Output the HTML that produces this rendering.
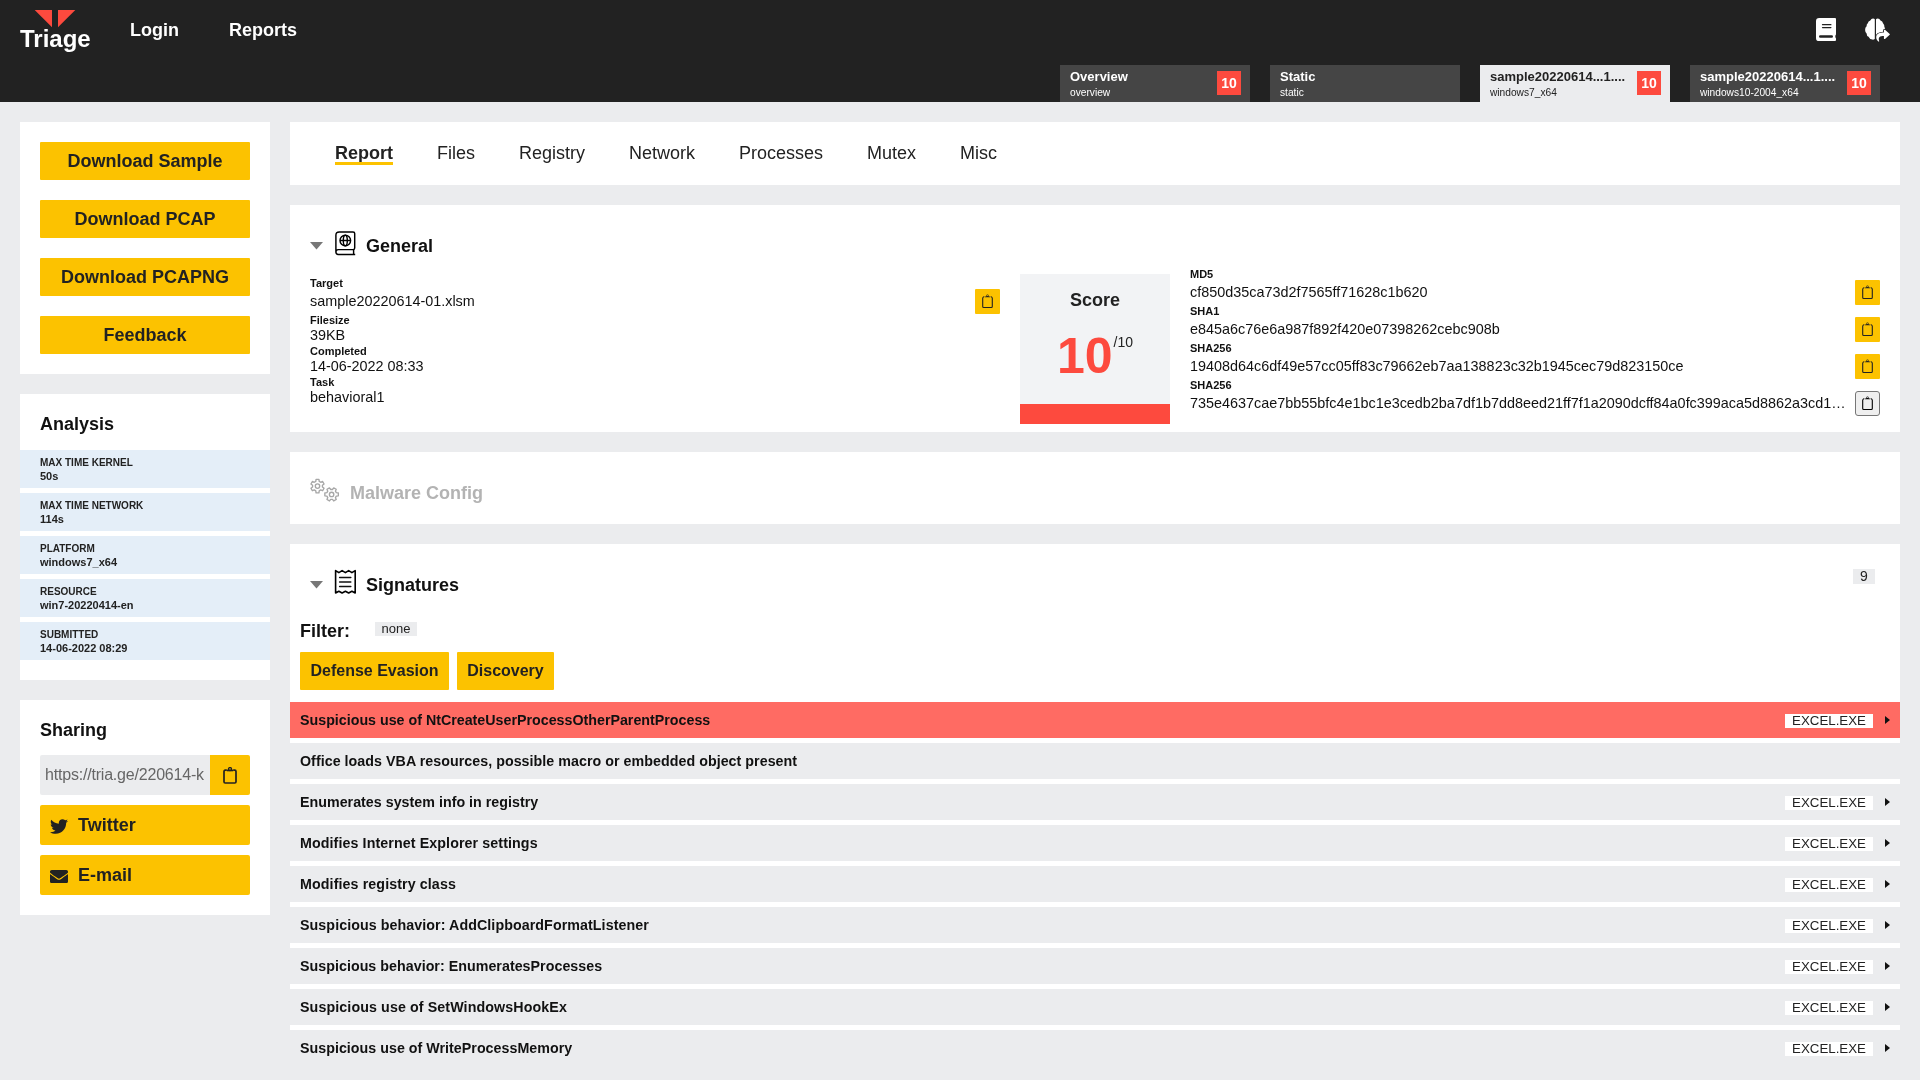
<!DOCTYPE html>
<html>
<head>
<meta charset="utf-8">
<style>
*{box-sizing:border-box;margin:0;padding:0}
html,body{width:1920px;height:1080px;overflow:hidden}
body{will-change:transform}
body{background:#ebecee;font-family:"Liberation Sans",sans-serif;color:#222;position:relative}
.abs{position:absolute}
#hdr{position:absolute;left:0;top:0;width:1920px;height:102px;background:#222}
#hdr .nav{position:absolute;top:18px;font-size:18px;font-weight:700;color:#fff;line-height:24px}
.tab{position:absolute;top:65px;width:190px;height:37px;background:#454545;color:#fff}
.tab.act{background:#ebecee;color:#222}
.tab .t1{position:absolute;left:10px;top:4px;font-size:13px;font-weight:700;line-height:16px;white-space:nowrap}
.tab .t2{position:absolute;left:10px;top:21px;font-size:10.2px;line-height:13px;white-space:nowrap}
.badge{position:absolute;left:157px;top:6px;width:24px;height:24px;background:#fd4a3e;color:#fff;font-weight:700;font-size:14px;line-height:24px;text-align:center}
.box{position:absolute;background:#fff}
.ybtn{position:absolute;background:#fcc200;color:#222;font-weight:700;text-align:center;border-radius:1px}
.dl{left:20px;width:210px;height:38px;font-size:18px;line-height:38px}
.h2{font-size:18px;font-weight:700;color:#111;position:absolute;line-height:22px}
.arow{position:absolute;left:0;width:250px;height:38px;background:#e4eef8;padding-left:20px}
.arow .l{position:absolute;left:20px;top:7px;font-size:10px;font-weight:700;line-height:12px;color:#222}
.arow .v{position:absolute;left:20px;top:20px;font-size:11px;font-weight:700;line-height:13px;color:#222}
.mtab{position:absolute;top:20px;font-size:18px;line-height:22px;color:#222}
.gl{position:absolute;left:20px;font-size:11px;font-weight:700;line-height:13px;color:#111}
.gv{position:absolute;left:20px;font-size:14.4px;line-height:17px;color:#111}
.hl{position:absolute;left:0;font-size:11px;font-weight:700;line-height:13px;color:#111}
.hv{position:absolute;left:0;width:662px;font-size:14.4px;line-height:17px;color:#111;white-space:nowrap;overflow:hidden;text-overflow:ellipsis}
.cp{position:absolute;width:25px;height:25px;background:#fcc200;border-radius:1px}
.cp svg{position:absolute;left:7px;top:5px}
.sig{position:absolute;left:0;width:1610px;height:36px;background:#ebecee}
.sig .st{position:absolute;left:10px;top:10px;font-size:14.25px;font-weight:700;line-height:17px;color:#111;white-space:nowrap}
.sig .tag{position:absolute;left:1495px;top:12px;width:88px;height:14px;background:#fff;font-size:13.3px;line-height:14px;text-align:center;color:#222}
.sig .car{position:absolute;left:1595px;top:14px;width:0;height:0;border-top:4px solid transparent;border-bottom:4px solid transparent;border-left:5px solid #111}
</style>
</head>
<body>
<div id="hdr">
  <svg class="abs" style="left:34px;top:10px" width="42" height="18" viewBox="0 0 42 18"><polygon points="0.7,0 18,0 18,17.3" fill="#fd4a3e"/><polygon points="24,0 41.3,0 24,17.3" fill="#fd4a3e"/></svg>
  <div class="abs" style="left:20px;top:24px;font-size:24px;font-weight:700;color:#fff;line-height:30px">Triage</div>
  <div class="nav" style="left:130px">Login</div>
  <div class="nav" style="left:229px">Reports</div>
  <svg class="abs" style="left:1815px;top:17px" width="23" height="26" viewBox="0 0 23 26"><path fill="#fff" d="M1 4.2Q1 1 4.2 1H20Q21 1 21 2V17.6Q20.3 18.3 20.3 19.5Q20.3 20.7 21 21.4V23.1Q21 24.1 20 24.1H4.2Q1 24.1 1 20.9Z"/><rect x="6.9" y="7" width="9.6" height="1.3" rx="0.6" fill="#222"/><rect x="6.9" y="10" width="9.6" height="1.2" rx="0.6" fill="#222"/><rect x="4" y="18.2" width="14" height="2.6" rx="1.3" fill="#222"/></svg>
  <svg class="abs" style="left:1864px;top:17px" width="28" height="26" viewBox="0 0 28 26"><path fill="#fff" d="M10.8 2.2Q10.2 1.6 9 1.6Q7.2 1.6 6.3 3.4Q4.2 3.8 3.8 6.2Q2.4 7.2 2.6 9.2Q1 10.4 1.1 13Q1.1 15.2 2.6 16.4Q2.6 18.8 4.6 19.8Q5.6 22.4 8.4 22.6Q9.6 22.8 10.8 22Z"/><path fill="#fff" d="M12 2.2Q12.6 1.6 13.8 1.6Q15.6 1.6 16.5 3.4Q18.6 3.8 19 6.2Q20.6 7.6 20.4 10Q21.6 11.4 20.8 13.4L12 19Z"/><g transform="translate(12.2 11.8) scale(0.0268)"><path d="M503.691 189.836L327.687 37.851C312.281 24.546 288 35.347 288 56.015v80.053C127.371 137.907 0 170.1 0 322.326c0 61.441 39.581 122.309 83.333 154.132 13.653 9.931 33.111-2.533 28.077-18.631C66.066 312.814 132.917 274.316 288 272.085V360c0 20.7 24.3 31.453 39.687 18.164l176.004-152c11.071-9.562 11.086-26.753 0-36.328z" fill="#222" stroke="#222" stroke-width="60" stroke-linejoin="round"/><path d="M503.691 189.836L327.687 37.851C312.281 24.546 288 35.347 288 56.015v80.053C127.371 137.907 0 170.1 0 322.326c0 61.441 39.581 122.309 83.333 154.132 13.653 9.931 33.111-2.533 28.077-18.631C66.066 312.814 132.917 274.316 288 272.085V360c0 20.7 24.3 31.453 39.687 18.164l176.004-152c11.071-9.562 11.086-26.753 0-36.328z" fill="#fff"/></g></svg>
  <div class="tab" style="left:1060px"><div class="t1">Overview</div><div class="t2">overview</div><div class="badge">10</div></div>
  <div class="tab" style="left:1270px"><div class="t1">Static</div><div class="t2">static</div></div>
  <div class="tab act" style="left:1480px"><div class="t1">sample20220614...1....</div><div class="t2">windows7_x64</div><div class="badge">10</div></div>
  <div class="tab" style="left:1690px"><div class="t1">sample20220614...1....</div><div class="t2">windows10-2004_x64</div><div class="badge">10</div></div>
</div>

<!-- left sidebar -->
<div class="box" style="left:20px;top:122px;width:250px;height:252px">
  <div class="ybtn dl" style="top:20px">Download Sample</div>
  <div class="ybtn dl" style="top:78px">Download PCAP</div>
  <div class="ybtn dl" style="top:136px">Download PCAPNG</div>
  <div class="ybtn dl" style="top:194px">Feedback</div>
</div>

<div class="box" style="left:20px;top:394px;width:250px;height:286px">
  <div class="h2" style="left:20px;top:19px">Analysis</div>
  <div class="arow" style="top:56px"><div class="l">MAX TIME KERNEL</div><div class="v">50s</div></div>
  <div class="arow" style="top:99px"><div class="l">MAX TIME NETWORK</div><div class="v">114s</div></div>
  <div class="arow" style="top:142px"><div class="l">PLATFORM</div><div class="v">windows7_x64</div></div>
  <div class="arow" style="top:185px"><div class="l">RESOURCE</div><div class="v">win7-20220414-en</div></div>
  <div class="arow" style="top:228px"><div class="l">SUBMITTED</div><div class="v">14-06-2022 08:29</div></div>
</div>

<div class="box" style="left:20px;top:700px;width:250px;height:215px">
  <div class="h2" style="left:20px;top:19px">Sharing</div>
  <div class="abs" style="left:20px;top:55px;width:170px;height:40px;background:#ebecee;border-radius:2px 0 0 2px;overflow:hidden">
    <div class="abs" style="left:5px;top:10px;font-size:16px;line-height:19px;color:#666;white-space:nowrap;letter-spacing:-0.2px">https://tria.ge/220614-k</div>
  </div>
  <div class="ybtn" style="left:190px;top:55px;width:40px;height:40px;border-radius:0 2px 2px 0">
    <svg class="abs" style="left:13px;top:12px" width="14" height="17" viewBox="0 0 14 17"><path d="M3.8 3.2H2.2Q1 3.2 1 4.4V14.8Q1 16 2.2 16H11.8Q13 16 13 14.8V4.4Q13 3.2 11.8 3.2H10.2" fill="none" stroke="#222" stroke-width="1.7"/><rect x="3.8" y="2.6" width="6.4" height="1.7" fill="#222"/><circle cx="7" cy="2" r="1.5" fill="none" stroke="#222" stroke-width="1.3"/></svg>
  </div>
  <div class="ybtn" style="left:20px;top:105px;width:210px;height:40px;text-align:left;border-radius:2px">
    <svg class="abs" style="left:10px;top:14px" width="18" height="15" viewBox="0 0 512 416"><path fill="#222" d="M459.4 103.7c.3 4.5.3 9.1.3 13.6 0 138.7-105.6 298.6-298.6 298.6-59.5 0-114.7-17.2-161.1-47.1 8.4 1 16.6 1.3 25.3 1.3 49.1 0 94.2-16.6 130.3-44.8-46.1-1-84.8-31.2-98.1-72.8 6.5 1 13 1.6 19.8 1.6 9.4 0 18.8-1.3 27.6-3.6-48.1-9.7-84.1-52-84.1-103v-1.3c14 7.8 30.2 12.7 47.4 13.3-28.3-18.8-46.8-51-46.8-87.4 0-19.5 5.2-37.4 14.3-53 51.7 63.7 129.3 105.3 216.4 109.8-1.6-7.8-2.6-15.9-2.6-24 0-57.8 46.8-104.9 104.9-104.9 30.2 0 57.5 12.7 76.7 33.1 23.7-4.5 46.5-13.3 66.6-25.3-7.8 24.4-24.4 44.8-46.1 57.8 21.1-2.3 41.6-8.1 60.4-16.2-14.3 20.8-32.2 39.3-52.6 54.3z"/></svg>
    <div class="abs" style="left:38px;top:9px;font-size:18px;line-height:22px">Twitter</div>
  </div>
  <div class="ybtn" style="left:20px;top:155px;width:210px;height:40px;text-align:left;border-radius:2px">
    <svg class="abs" style="left:10px;top:14.5px" width="18" height="13" viewBox="0 0 512 384" preserveAspectRatio="none"><path fill="#222" d="M502.3 126.8c3.9-3.1 9.7-.2 9.7 4.7V336c0 26.5-21.5 48-48 48H48c-26.5 0-48-21.5-48-48V131.6c0-5 5.7-7.8 9.7-4.7 22.4 17.4 52.1 39.5 154.1 113.6 21.1 15.4 56.7 47.8 92.2 47.6 35.7.3 72-32.8 92.3-47.6 102-74.1 131.6-96.3 154-113.7zM256 256c23.2.4 56.6-29.2 73.4-41.4 132.7-96.3 142.8-104.7 173.4-128.7 5.8-4.5 9.2-11.5 9.2-18.9V48c0-26.5-21.5-48-48-48H48C21.5 0 0 21.5 0 48v19c0 7.4 3.4 14.3 9.2 18.9 30.6 23.9 40.7 32.4 173.4 128.7 16.8 12.2 50.2 41.8 73.4 41.4z"/></svg>
    <div class="abs" style="left:38px;top:9px;font-size:18px;line-height:22px">E-mail</div>
  </div>
</div>

<!-- main tabs -->
<div class="box" style="left:290px;top:122px;width:1610px;height:63px">
  <div class="mtab" style="left:45px;font-weight:700">Report</div>
  <div class="abs" style="left:45px;top:40px;width:58px;height:3px;background:#fcc200"></div>
  <div class="mtab" style="left:147px">Files</div>
  <div class="mtab" style="left:229px">Registry</div>
  <div class="mtab" style="left:339px">Network</div>
  <div class="mtab" style="left:449px">Processes</div>
  <div class="mtab" style="left:577px">Mutex</div>
  <div class="mtab" style="left:670px">Misc</div>
</div>

<!-- general -->
<div class="box" style="left:290px;top:205px;width:1610px;height:227px">
  <svg class="abs" style="left:20px;top:37px" width="13" height="8" viewBox="0 0 13 8"><polygon points="0,0 13,0 6.5,7.6" fill="#777"/></svg>
  <svg class="abs" style="left:45px;top:26px" width="22" height="25" viewBox="0 0 22 25"><g fill="none" stroke="#000" stroke-width="1.45" stroke-linejoin="round"><path d="M0.9 21.2V4.2Q0.9 0.9 4.2 0.9H18Q19.7 0.9 19.7 2.6V16.9Q19.7 18.6 18 18.6H3.3Q0.9 18.6 0.9 21.1Q0.9 23.5 3.3 23.5H20.2"/><path d="M18.6 18.6V23.5"/><circle cx="10.3" cy="9.5" r="5.3"/><ellipse cx="10.3" cy="9.5" rx="2" ry="5.3"/><path d="M5 9.5H15.6"/></g></svg>
  <div class="h2" style="left:76px;top:30px">General</div>

  <div class="gl" style="top:72px">Target</div>
  <div class="gv" style="top:88px">sample20220614-01.xlsm</div>
  <div class="cp" style="left:685px;top:84px"><svg width="11" height="15" viewBox="0 0 11 15"><path d="M2.3 2.4Q0.7 2.9 0.7 4.3V12.5Q0.7 13.5 1.7 13.5H9.3Q10.3 13.5 10.3 12.5V4.3Q10.3 2.9 8.7 2.4" fill="none" stroke="#222" stroke-width="1.1"/><path d="M2.8 3.3Q3 2.3 4.4 2.2V1.6Q4.4 0.5 5.5 0.5Q6.6 0.5 6.6 1.6V2.2Q8 2.3 8.2 3.3Z" fill="#222"/><circle cx="5.5" cy="1.6" r="0.5" fill="#fcc200"/></svg></div>
  <div class="gl" style="top:109px">Filesize</div>
  <div class="gv" style="top:122px">39KB</div>
  <div class="gl" style="top:140px">Completed</div>
  <div class="gv" style="top:153px">14-06-2022 08:33</div>
  <div class="gl" style="top:171px">Task</div>
  <div class="gv" style="top:184px">behavioral1</div>

  <div class="abs" style="left:730px;top:69px;width:150px;height:150px;background:#f2f3f5">
    <div class="abs" style="left:0;top:16px;width:150px;text-align:center;font-size:18px;font-weight:700;line-height:20px;color:#222">Score</div>
    <div class="abs" style="left:37px;top:54px;font-size:50px;font-weight:700;line-height:56px;color:#fd4a3e">10</div>
    <div class="abs" style="left:93.5px;top:61px;font-size:14px;line-height:15px;color:#222">/10</div>
    <div class="abs" style="left:0;top:130px;width:150px;height:20px;background:#fd4a3e"></div>
  </div>

  <div class="abs" style="left:900px;top:60px;width:710px;height:160px">
    <div class="hl" style="top:3px">MD5</div>
    <div class="hv" style="top:19px">cf850d35ca73d2f7565ff71628c1b620</div>
    <div class="hl" style="top:40px">SHA1</div>
    <div class="hv" style="top:56px">e845a6c76e6a987f892f420e07398262cebc908b</div>
    <div class="hl" style="top:77px">SHA256</div>
    <div class="hv" style="top:93px">19408d64c6df49e57cc05ff83c79662eb7aa138823c32b1945cec79d823150ce</div>
    <div class="hl" style="top:114px">SHA256</div>
    <div class="hv" style="top:130px">735e4637cae7bb55bfc4e1bc1e3cedb2ba7df1b7dd8eed21ff7f1a2090dcff84a0fc399aca5d8862a3cd1e6e4a53b2a1</div>
  </div>
  <div class="cp" style="left:1565px;top:75px"><svg width="11" height="15" viewBox="0 0 11 15"><path d="M2.3 2.4Q0.7 2.9 0.7 4.3V12.5Q0.7 13.5 1.7 13.5H9.3Q10.3 13.5 10.3 12.5V4.3Q10.3 2.9 8.7 2.4" fill="none" stroke="#222" stroke-width="1.1"/><path d="M2.8 3.3Q3 2.3 4.4 2.2V1.6Q4.4 0.5 5.5 0.5Q6.6 0.5 6.6 1.6V2.2Q8 2.3 8.2 3.3Z" fill="#222"/><circle cx="5.5" cy="1.6" r="0.5" fill="#fcc200"/></svg></div>
  <div class="cp" style="left:1565px;top:112px"><svg width="11" height="15" viewBox="0 0 11 15"><path d="M2.3 2.4Q0.7 2.9 0.7 4.3V12.5Q0.7 13.5 1.7 13.5H9.3Q10.3 13.5 10.3 12.5V4.3Q10.3 2.9 8.7 2.4" fill="none" stroke="#222" stroke-width="1.1"/><path d="M2.8 3.3Q3 2.3 4.4 2.2V1.6Q4.4 0.5 5.5 0.5Q6.6 0.5 6.6 1.6V2.2Q8 2.3 8.2 3.3Z" fill="#222"/><circle cx="5.5" cy="1.6" r="0.5" fill="#fcc200"/></svg></div>
  <div class="cp" style="left:1565px;top:149px"><svg width="11" height="15" viewBox="0 0 11 15"><path d="M2.3 2.4Q0.7 2.9 0.7 4.3V12.5Q0.7 13.5 1.7 13.5H9.3Q10.3 13.5 10.3 12.5V4.3Q10.3 2.9 8.7 2.4" fill="none" stroke="#222" stroke-width="1.1"/><path d="M2.8 3.3Q3 2.3 4.4 2.2V1.6Q4.4 0.5 5.5 0.5Q6.6 0.5 6.6 1.6V2.2Q8 2.3 8.2 3.3Z" fill="#222"/><circle cx="5.5" cy="1.6" r="0.5" fill="#fcc200"/></svg></div>
  <div class="cp" style="left:1565px;top:186px;background:#efefef;border:1px solid #767676;border-radius:3px"><svg style="left:6px;top:4px" width="11" height="15" viewBox="0 0 11 15"><path d="M2.3 2.4Q0.7 2.9 0.7 4.3V12.5Q0.7 13.5 1.7 13.5H9.3Q10.3 13.5 10.3 12.5V4.3Q10.3 2.9 8.7 2.4" fill="none" stroke="#000" stroke-width="1.1"/><path d="M2.8 3.3Q3 2.3 4.4 2.2V1.6Q4.4 0.5 5.5 0.5Q6.6 0.5 6.6 1.6V2.2Q8 2.3 8.2 3.3Z" fill="#000"/><circle cx="5.5" cy="1.6" r="0.5" fill="#efefef"/></svg></div>
</div>

<!-- malware config -->
<div class="box" style="left:290px;top:452px;width:1610px;height:72px">
  <svg class="abs" style="left:19px;top:25px" width="32" height="27" viewBox="0 0 32 27">
    <g fill="none" stroke="#a6a6a6" stroke-width="1.35" stroke-linejoin="round">
      <path d="M6.79,4.40 L7.07,2.35 L9.93,2.35 L10.21,4.40 L11.71,5.27 L13.63,4.48 L15.06,6.97 L13.42,8.23 L13.42,9.97 L15.06,11.23 L13.63,13.72 L11.71,12.93 L10.21,13.80 L9.93,15.85 L7.07,15.85 L6.79,13.80 L5.29,12.93 L3.37,13.72 L1.94,11.23 L3.58,9.97 L3.58,8.23 L1.94,6.97 L3.37,4.48 L5.29,5.27Z"/>
      <circle cx="8.5" cy="9.1" r="2.2"/>
      <path d="M23.47,12.48 L24.73,10.84 L27.22,12.27 L26.43,14.19 L27.30,15.69 L29.35,15.97 L29.35,18.83 L27.30,19.11 L26.43,20.61 L27.22,22.53 L24.73,23.96 L23.47,22.32 L21.73,22.32 L20.47,23.96 L17.98,22.53 L18.77,20.61 L17.90,19.11 L15.85,18.83 L15.85,15.97 L17.90,15.69 L18.77,14.19 L17.98,12.27 L20.47,10.84 L21.73,12.48Z"/>
      <circle cx="22.6" cy="17.4" r="2.2"/>
    </g>
  </svg>
  <div class="h2" style="left:60px;top:30px;color:#b3b3b3">Malware Config</div>
</div>

<!-- signatures -->
<div class="box" style="left:290px;top:544px;width:1610px;height:536px">
  <svg class="abs" style="left:20px;top:37px" width="13" height="8" viewBox="0 0 13 8"><polygon points="0,0 13,0 6.5,7.6" fill="#777"/></svg>
  <svg class="abs" style="left:44px;top:25px" width="23" height="26" viewBox="0 0 23 26"><path d="M1.6 1.6L4.85 3.6L8.1 1.6L11.4 3.6L14.65 1.6L17.9 3.6L21.2 1.6V24L17.9 22.3L14.65 24L11.4 22.3L8.1 24L4.85 22.3L1.6 24Z" fill="none" stroke="#000" stroke-width="1.6" stroke-linejoin="round"/><path d="M5.6 8.4H16.8M5.6 13H16.8M5.6 17.5H16.8" stroke="#111" stroke-width="1.5" stroke-linecap="round"/></svg>
  <div class="h2" style="left:76px;top:30px">Signatures</div>
  <div class="abs" style="left:1563px;top:25px;width:22px;height:15px;background:#ebecee;font-size:14px;line-height:15px;text-align:center;color:#222">9</div>
  <div class="abs" style="left:10px;top:76px;font-size:18px;font-weight:700;line-height:22px;color:#111">Filter:</div>
  <div class="abs" style="left:85px;top:78px;width:42px;height:14px;background:#ebecee;font-size:13px;line-height:14px;text-align:center;color:#222">none</div>
  <div class="ybtn" style="left:10px;top:108px;width:149px;height:38px;font-size:16px;line-height:38px">Defense Evasion</div>
  <div class="ybtn" style="left:167px;top:108px;width:97px;height:38px;font-size:16px;line-height:38px">Discovery</div>

  <div class="sig" style="top:158px;background:#ff6b63"><div class="st">Suspicious use of NtCreateUserProcessOtherParentProcess</div><div class="tag">EXCEL.EXE</div><div class="car"></div></div>
  <div class="sig" style="top:199px"><div class="st" style="letter-spacing:0.039px">Office loads VBA resources, possible macro or embedded object present</div></div>
  <div class="sig" style="top:240px"><div class="st" style="letter-spacing:0.018px">Enumerates system info in registry</div><div class="tag">EXCEL.EXE</div><div class="car"></div></div>
  <div class="sig" style="top:281px"><div class="st" style="letter-spacing:0.094px">Modifies Internet Explorer settings</div><div class="tag">EXCEL.EXE</div><div class="car"></div></div>
  <div class="sig" style="top:322px"><div class="st" style="letter-spacing:0.1px">Modifies registry class</div><div class="tag">EXCEL.EXE</div><div class="car"></div></div>
  <div class="sig" style="top:363px"><div class="st" style="letter-spacing:0.072px">Suspicious behavior: AddClipboardFormatListener</div><div class="tag">EXCEL.EXE</div><div class="car"></div></div>
  <div class="sig" style="top:404px"><div class="st" style="letter-spacing:0.03px">Suspicious behavior: EnumeratesProcesses</div><div class="tag">EXCEL.EXE</div><div class="car"></div></div>
  <div class="sig" style="top:445px"><div class="st" style="letter-spacing:0.1px">Suspicious use of SetWindowsHookEx</div><div class="tag">EXCEL.EXE</div><div class="car"></div></div>
  <div class="sig" style="top:486px;height:50px"><div class="st" style="letter-spacing:0.023px">Suspicious use of WriteProcessMemory</div><div class="tag">EXCEL.EXE</div><div class="car"></div></div>
</div>
</body>
</html>
